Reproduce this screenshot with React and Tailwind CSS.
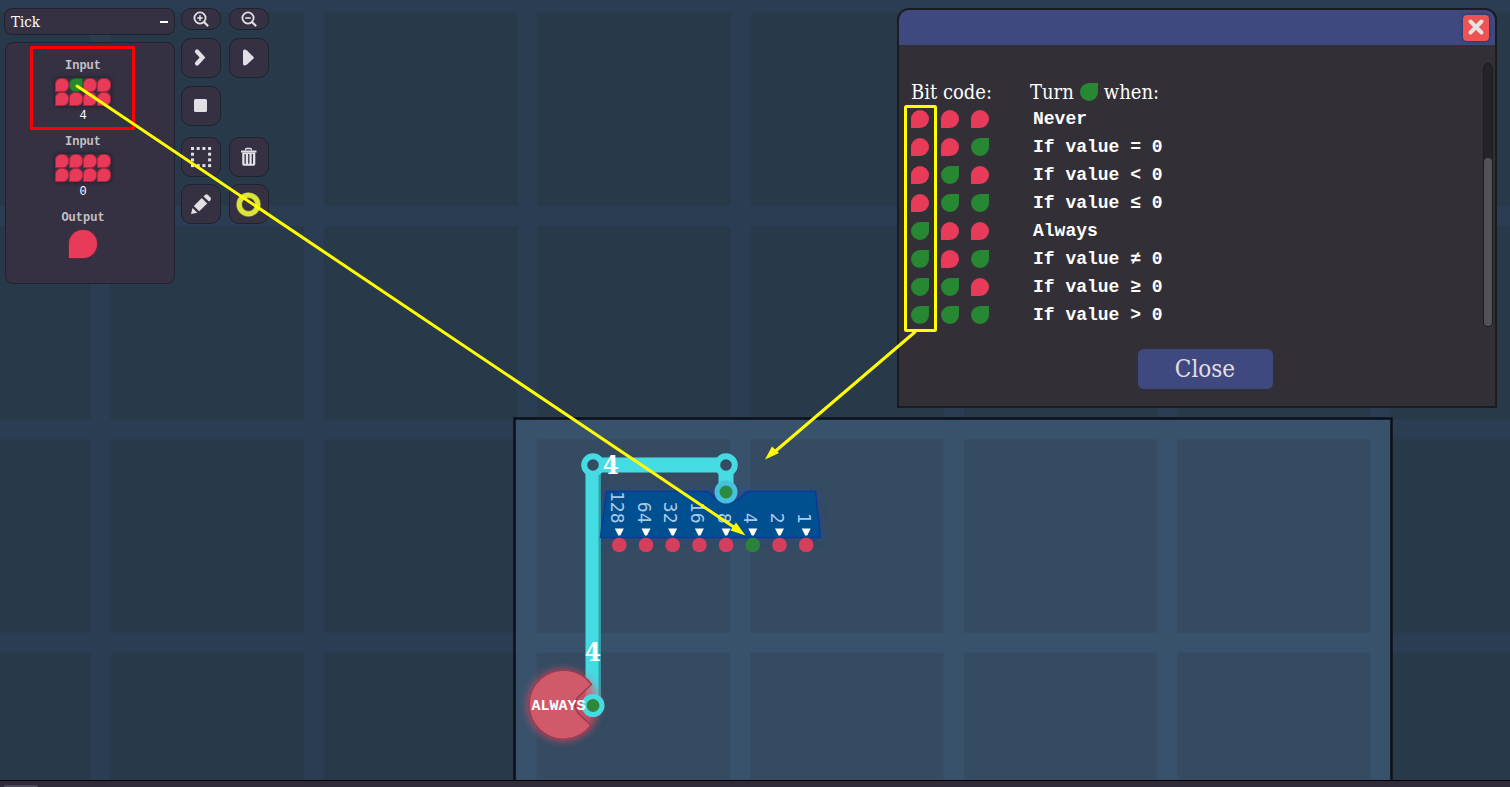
import React from "react";

const GRID = 213.4;
const slab = "font-['DejaVu_Serif_Condensed','DejaVu_Serif',serif]";
const mono = "font-['Liberation_Mono',monospace]";

function Blob({ on }) {
  return (
    <span
      role="img"
      aria-label={on ? "on" : "off"}
      className={
        on
          ? "inline-block size-[18px] shrink-0 rounded-full rounded-tr-none bg-[#278732]"
          : "inline-block size-[18px] shrink-0 rounded-full rounded-bl-none bg-[#e83b59]"
      }
    />
  );
}

function ByteBits({ value }) {
  const order = [3, 2, 1, 0, 7, 6, 5, 4];
  return (
    <div className="grid grid-cols-4 rounded shadow-[0_0_4px_#1d1a26]">
      {order.map((bit) => {
        const on = ((value >> bit) & 1) === 1;
        return (
          <span
            key={bit}
            role="img"
            aria-label={on ? "on" : "off"}
            className={
              on
                ? "size-3.5 rounded-md rounded-tr-none border border-[#136c1c] bg-[#278732]"
                : "size-3.5 rounded-md rounded-bl-none border border-[#b3243f] bg-[#e83b59]"
            }
          />
        );
      })}
    </div>
  );
}

function Pin({ label, children, value }) {
  return (
    <div className="flex flex-col items-center">
      <div className="text-xs leading-4 font-bold text-[#c4c2c7]">{label}</div>
      <div className="mt-1">{children}</div>
      {value !== undefined && <div className="mt-1 text-xs leading-3 text-white">{value}</div>}
    </div>
  );
}

function Tool({ label, short, children }) {
  return (
    <button
      type="button"
      aria-label={label}
      className={
        short
          ? "flex h-[22px] w-10 items-center justify-center rounded-[10px] border border-[#20222d] bg-[#363142] text-[#e2e0e4]"
          : "flex size-10 items-center justify-center rounded-[10px] border border-[#20222d] bg-[#363142] text-[#e2e0e4]"
      }
    >
      {children}
    </button>
  );
}

function Glyph({ children }) {
  return (
    <svg viewBox="0 0 40 40" className="size-10 shrink-0" fill="currentColor" aria-hidden="true">
      {children}
    </svg>
  );
}

function Magnifier({ plus }) {
  return (
    <svg viewBox="0 0 16 16" className="size-4 shrink-0" fill="none" stroke="currentColor" aria-hidden="true">
      <circle cx="7" cy="7" r="5.600" strokeWidth="1.800" />
      <path d="M11 11 14.500 14.500" strokeWidth="2.200" strokeLinecap="round" />
      <path d={plus ? "M4.200 7H9.800M7 4.200V9.800" : "M4.200 7H9.800"} strokeWidth="1.600" />
    </svg>
  );
}

const dots = [0, 1, 2, 3].flatMap((r) =>
  [0, 1, 2, 3].filter((c) => r === 0 || r === 3 || c === 0 || c === 3).map((c) => [c, r])
);

function Toolbar() {
  return (
    <div className="flex flex-col gap-2">
      <div className="flex gap-2">
        <Tool label="Zoom in" short>
          <Magnifier plus />
        </Tool>
        <Tool label="Zoom out" short>
          <Magnifier />
        </Tool>
      </div>
      <div className="flex gap-2">
        <Tool label="Step">
          <Glyph>
            <path d="M16 13.500 21.500 19.500 16 25.500" fill="none" stroke="currentColor" strokeWidth="4.200" strokeLinecap="round" strokeLinejoin="miter" />
          </Glyph>
        </Tool>
        <Tool label="Run">
          <Glyph>
            <path d="M14 13.500Q14 11 16.500 11.800L18 12.500 24.800 19.200V20.200L18 26.500 16.500 27.200Q14 28 14 25.500Z" />
          </Glyph>
        </Tool>
      </div>
      <div className="flex gap-2">
        <Tool label="Stop">
          <Glyph>
            <rect x="13" y="13" width="13" height="13" rx="1.500" />
          </Glyph>
        </Tool>
      </div>
      <div className="mt-[3px] flex gap-2">
        <Tool label="Select">
          <Glyph>
            {dots.map(([c, r]) => (
              <rect key={`${c}-${r}`} x={10 + c * 5.7} y={10 + r * 5.7} width="3" height="3" />
            ))}
          </Glyph>
        </Tool>
        <Tool label="Delete">
          <Glyph>
            <path d="M16.500 13.500V13Q16.500 11.500 17.800 11.500H21.200Q22.500 11.500 22.500 13V13.500" fill="none" stroke="currentColor" strokeWidth="1.300" />
            <path d="M12 13.500H27.500V15.500H12Z" />
            <path
              fillRule="evenodd"
              d="M13.200 15.500H26.300V27Q26.300 28.800 24.600 28.800H14.900Q13.200 28.800 13.200 27ZM15.500 17V26.800H16.800V17ZM19.100 17V26.800H20.400V17ZM22.700 17V26.800H24V17Z"
            />
          </Glyph>
        </Tool>
      </div>
      <div className="-mt-px flex gap-2">
        <Tool label="Edit">
          <Glyph>
            <path d="M22.500 12.500 24 11Q25.500 9.600 27 11L29.500 13.500Q30.600 15 29.400 16.300L28 17.600Z" />
            <path d="M20.800 14 26.200 19.400 18.200 27.300 12.800 22Z" />
            <path d="M11.500 24 16.300 28.800 10 30Z" />
          </Glyph>
        </Tool>
        <Tool label="Color">
          <Glyph>
            <circle cx="19.500" cy="20.500" r="9.300" fill="none" stroke="#8d9136" strokeWidth="6" />
            <circle cx="19.500" cy="20.500" r="9.300" fill="none" stroke="#dde43c" strokeWidth="4.800" />
          </Glyph>
        </Tool>
      </div>
    </div>
  );
}

const conditions = [
  "Never",
  "If value = 0",
  "If value < 0",
  "If value ≤ 0",
  "Always",
  "If value ≠ 0",
  "If value ≥ 0",
  "If value > 0",
];

function HelpDialog() {
  return (
    <section
      role="dialog"
      aria-label="Bit codes"
      className="ml-auto w-[600px] overflow-hidden rounded-t-xl border-2 border-[#1b1c21] bg-[#323036] text-white"
    >
      <header className="flex h-[35px] items-center justify-end bg-[#3f4980] px-1.5">
        <button
          type="button"
          aria-label="Close dialog"
          className="flex size-[26px] items-center justify-center rounded bg-[#ee5253] shadow-[0_0_3px_#252a55]"
        >
          <svg viewBox="0 0 20 20" className="size-5" fill="none" stroke="#e6e2e2" strokeWidth="4" strokeLinecap="round" aria-hidden="true">
            <path d="M4.500 3.500 15.500 14.500M15.500 3.500 4.500 14.500" />
          </svg>
        </button>
      </header>
      <div className="flex items-start justify-between pt-[18px] pr-0.5 pl-3">
        <table className="mt-4 border-collapse text-left">
          <thead>
            <tr className={`h-[26px] text-xl leading-6 ${slab}`}>
              <th scope="col" colSpan={3} className="p-0 font-normal whitespace-nowrap">
                Bit code:
              </th>
              <th scope="col" className="p-0 pl-[29px] font-normal whitespace-nowrap">
                <span className="flex items-center gap-1.5">
                  Turn <Blob on /> when:
                </span>
              </th>
            </tr>
          </thead>
          <tbody>
            {conditions.map((text, code) => (
              <tr key={text} className="h-7">
                {[4, 2, 1].map((mask) => (
                  <td key={mask} className="w-[30px] p-0 align-middle">
                    <span className="flex w-[30px]">
                      <Blob on={(code & mask) !== 0} />
                    </span>
                  </td>
                ))}
                <td className={`p-0 pl-8 align-middle text-lg leading-7 font-bold whitespace-nowrap ${mono}`}>{text}</td>
              </tr>
            ))}
          </tbody>
        </table>
        <div className="flex h-[264px] w-2.5 items-end rounded-md border border-[#1d1c21] bg-[#242328]">
          <div className="h-[168px] w-full rounded-md bg-[#535257]" />
        </div>
      </div>
      <div className="flex justify-center pt-5 pb-[17px] pl-4">
        <button type="button" className={`h-10 w-[135px] rounded-md bg-[#3f4980] text-2xl text-[#e0dfe5] ${slab}`}>
          Close
        </button>
      </div>
    </section>
  );
}

const pins = [128, 64, 32, 16, 8, 4, 2, 1];

function Circuit() {
  return (
    <svg className="absolute inset-0 size-full" aria-hidden="true">
      <defs>
        <pattern id="outer" width={GRID} height={GRID} x="90.500" y="206" patternUnits="userSpaceOnUse">
          <rect width={GRID} height={GRID} fill="#28394a" />
          <path d={`M0 0H${GRID}V20H20V${GRID}H0Z`} fill="#2b3d52" />
        </pattern>
        <pattern id="inner" width={GRID} height={GRID} x="90" y="206" patternUnits="userSpaceOnUse">
          <rect width={GRID} height={GRID} fill="#344b62" />
          <path d={`M0 0H${GRID}V20H20V${GRID}H0Z`} fill="#38526c" />
        </pattern>
        <filter id="glow" x="-50%" y="-50%" width="200%" height="200%">
          <feGaussianBlur stdDeviation="5" />
        </filter>
      </defs>
      <rect width="100%" height="100%" fill="url(#outer)" />
      <rect x="514.500" y="418.500" width="877" height="400" fill="url(#inner)" stroke="#0c1016" strokeWidth="2.500" />

      <path d="M606 491H815L821 538H600Z" fill="#2347a0" opacity="0.6" filter="url(#glow)" />
      <path d="M593 705V465H726V491" fill="none" stroke="#44dbe3" strokeWidth="15" />
      <path d="M599.500 473V698" stroke="#2fa1a9" strokeWidth="2" />
      <path
        d="M606.500 491.500H707Q711 493 714 498Q719 503 726 503.500Q735 503 740 498L747 491.500H815.500L820.500 537.500H600.500Z"
        fill="#005091"
        stroke="#0b3a9a"
        strokeWidth="1.500"
      />
      <circle cx="593" cy="465" r="8.800" fill="#344b62" stroke="#44dbe3" strokeWidth="6" />
      <circle cx="726" cy="465" r="8.800" fill="#344b62" stroke="#44dbe3" strokeWidth="6" />
      <circle cx="726" cy="492" r="11.500" fill="#46c2dc" />
      <circle cx="726" cy="492" r="6.500" fill="#2c8a45" />

      {pins.map((value, i) => {
        const x = 619.3 + i * 26.7;
        return (
          <g key={value}>
            <text
              transform={`translate(${x - 8.5} 523.500) rotate(90)`}
              textAnchor="end"
              className="fill-[#a9cbe8] font-['DejaVu_Sans_Mono',monospace] text-[18px]"
            >
              {value}
            </text>
            <path d={`M${x - 4.5} 528.500H${x + 4.5}L${x + 1} 535.500H${x - 1}Z`} fill="#fff" />
            <circle cx={x} cy="545" r="7.300" fill={value === 4 ? "#2b823d" : "#d63e5e"} />
          </g>
        );
      })}

      <circle cx="563" cy="705" r="35" fill="#ee4d62" opacity="0.8" filter="url(#glow)" />
      <path
        d="M591.500 684.500A34.500 34.500 0 1 0 591 725.500L578 713Q572 705 578 697Z"
        fill="#d0596a"
        stroke="#9c3a50"
        strokeWidth="1.500"
        strokeLinejoin="round"
      />
      <circle cx="593" cy="705.500" r="11.500" fill="#44dbe3" />
      <circle cx="593" cy="705.500" r="6.500" fill="#2f873a" />

      <g className="fill-white font-bold">
        <text x="611" y="474" textAnchor="middle" className="font-['DejaVu_Serif_Condensed','DejaVu_Serif',serif] text-[26px]">
          4
        </text>
        <text x="593" y="661" textAnchor="middle" className="font-['DejaVu_Serif_Condensed','DejaVu_Serif',serif] text-[26px]">
          4
        </text>
        <text x="558.500" y="710" textAnchor="middle" className="font-['Liberation_Mono',monospace] text-[15px]">
          ALWAYS
        </text>
      </g>
    </svg>
  );
}

function Annotations() {
  return (
    <svg className="pointer-events-none absolute inset-0 size-full" aria-hidden="true">
      <rect x="31.500" y="47.500" width="102" height="81" fill="none" stroke="#ff0000" strokeWidth="3" />
      <rect x="905.500" y="106.500" width="30" height="224" rx="1" fill="none" stroke="#ffff00" strokeWidth="3" />
      <g stroke="#ffff00" strokeWidth="3" strokeLinecap="round">
        <path d="M77 86 736 528.500" />
        <path d="M915 332 775 451.500" />
      </g>
      <g fill="#ffff00">
        <path d="M745.500 535.500 730.500 530.500 736 522.500Z" />
        <path d="M765 459.500 772 446.500 779 453Z" />
      </g>
    </svg>
  );
}

export default function App() {
  return (
    <div className="flex h-screen flex-col overflow-hidden bg-[#2e2a3a]">
      <main className="relative min-h-0 flex-1">
        <Circuit />
        <div className="relative flex items-start gap-1.5 pt-2 pr-[13px] pl-1">
          <aside className="flex w-[171px] flex-col gap-[7px]">
            <header className="flex h-[27px] items-center justify-between rounded-lg border border-[#20222d] bg-[#363142] px-1.5 text-white">
              <h1 className={`text-[15px] leading-5 ${slab}`}>Tick</h1>
              <button type="button" aria-label="Minimize" className="flex size-4 items-center justify-end">
                <span className="h-0.5 w-2 bg-white" />
              </button>
            </header>
            <div className={`ml-px flex h-[242px] flex-col items-center rounded-lg border border-[#20222d] bg-[#363142] pt-[15px] pr-3.5 ${mono}`}>
              <Pin label="Input" value={4}>
                <ByteBits value={4} />
              </Pin>
              <div className="mt-3">
                <Pin label="Input" value={0}>
                  <ByteBits value={0} />
                </Pin>
              </div>
              <div className="mt-3">
                <Pin label="Output">
                  <span
                    role="img"
                    aria-label="off"
                    className="block size-7 rounded-full rounded-bl-none bg-[#e83b59] shadow-[0_0_2px_#b3243f]"
                  />
                </Pin>
              </div>
            </div>
          </aside>
          <Toolbar />
          <HelpDialog />
        </div>
        <Annotations />
      </main>
      <footer className="flex h-[7px] shrink-0 items-end border-t border-black px-1">
        <div className="h-0.5 w-[34px] rounded-t bg-[#4d495a]" />
      </footer>
    </div>
  );
}
